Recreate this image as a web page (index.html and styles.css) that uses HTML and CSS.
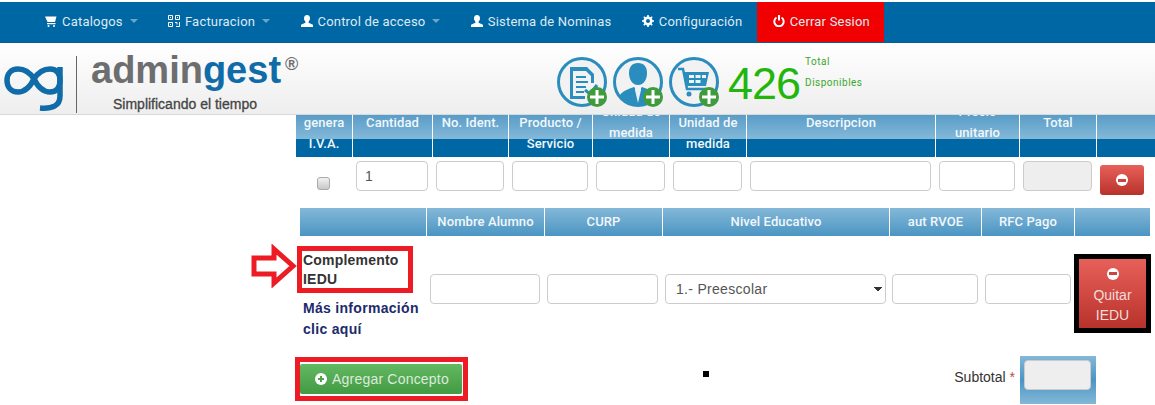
FILE: index.html
```html
<!DOCTYPE html>
<html lang="en">
<head>
    <meta charset="UTF-8">
    <meta name="viewport" content="width=device-width, initial-scale=1.0">
    <title>Admingest</title>
    <link rel="stylesheet" href="styles.css">
</head>
<body>
<nav class="navbar">
    <a class="nav-item">
        <svg class="nav-icon" viewBox="0 0 12 12"><path d="M0 1.500h11.500L10 7H2.500zM2 8h8.500v1.300H2z" fill="#fff"/><circle cx="3.500" cy="11" r="1" fill="#fff"/><circle cx="9" cy="11" r="1" fill="#fff"/></svg>
        <span>Catalogos</span><span class="caret"></span>
    </a>
    <a class="nav-item">
        <svg class="nav-icon" viewBox="0 0 12 12" fill="none" stroke="#fff"><path d="M.5.5h4v4h-4zM7.500.5h4v4h-4zM.5 7.500h4v4h-4zM7 7.500h2v2M11.500 7v4.500H8M2 2.500h1M9 2.500h1M2 9.500h1"/></svg>
        <span>Facturacion</span><span class="caret"></span>
    </a>
    <a class="nav-item">
        <svg class="nav-icon" viewBox="0 0 12 12"><path d="M6 0c2 0 3 1.500 3 3.300C9 5 8.200 6 7.600 6.800v1L12 9.800V12H0V9.800l4.400-2v-1C3.800 6 3 5 3 3.300 3 1.500 4 0 6 0z" fill="#fff"/></svg>
        <span>Control de acceso</span><span class="caret"></span>
    </a>
    <a class="nav-item">
        <svg class="nav-icon" viewBox="0 0 12 12"><path d="M6 0c2 0 3 1.500 3 3.300C9 5 8.200 6 7.600 6.800v1L12 9.800V12H0V9.800l4.400-2v-1C3.800 6 3 5 3 3.300 3 1.500 4 0 6 0z" fill="#fff"/></svg>
        <span>Sistema de Nominas</span>
    </a>
    <a class="nav-item">
        <svg class="nav-icon" viewBox="0 0 12 12"><circle cx="6" cy="6" r="3.300" fill="none" stroke="#fff" stroke-width="2.600"/><path d="M6 0v12M0 6h12M1.800 1.800l8.400 8.400M10.200 1.800l-8.400 8.400" stroke="#fff" stroke-width="1.600" stroke-dasharray="2 8"/></svg>
        <span>Configuración</span>
    </a>
    <a class="nav-item nav-exit">
        <svg class="nav-icon" viewBox="0 0 12 12" fill="none" stroke="#fff" stroke-width="2"><path d="M3.500 2.500a4.700 4.700 0 1 0 5 0M6 0v5.500"/></svg>
        <span>Cerrar Sesion</span>
    </a>
</nav>

<header class="top-header">
    <svg class="logo-mark" viewBox="0 0 66 54" fill="none" stroke="#0f6ca8" stroke-width="5.500">
        <path d="M32 14C27 6 22 4 16 4 9 4 5 9 5 15.500S9 27 16 27c6 0 11-3 16-13 5-8 10-10 16-10 7 0 10 5 10 11.500S55 27 48 27c-6 0-11-3-16-13z"/>
        <path d="M58 2v29c0 10-8 13-20 12"/>
    </svg>
    <div class="logo-divider"></div>
    <div class="brand">
        <div class="brand-name">admin<span class="brand-blue">gest</span><span class="brand-reg">®</span></div>
        <div class="brand-tag">Simplificando el tiempo</div>
    </div>
    <div class="quick-icons">
        <svg class="quick-icon" viewBox="0 0 52 52">
            <circle cx="25" cy="25" r="23.500" fill="#f2f2f2" stroke="#2a8dbd" stroke-width="3"/>
            <path d="M13 10h17l7 7v9h-3v-7l-5-5H16v25h12v3H13z" fill="#2a8dbd"/>
            <path d="M19 19h10v2H19zM19 24h12v2H19zM19 29h10v2H19zM19 34h8v2H19z" fill="#2a8dbd"/>
            <path d="M28 33l5 4 7-9" fill="none" stroke="#2a8dbd" stroke-width="3"/>
            <circle cx="40" cy="40" r="10" fill="#3f9b3c"/>
            <path d="M40 33v14M33 40h14" stroke="#fff" stroke-width="3"/>
        </svg>
        <svg class="quick-icon" viewBox="0 0 52 52">
            <circle cx="25" cy="25" r="23.500" fill="#f2f2f2" stroke="#2a8dbd" stroke-width="3"/>
            <path d="M25 6c6 0 9 4 9 10 0 6-3 12-9 12s-9-6-9-12c0-6 3-10 9-10z" fill="#2a8dbd"/>
            <path d="M6 40c2-6 10-8 15-10l4 4 4-4c5 2 13 4 15 10-4 5-11 8-19 8S10 45 6 40z" fill="#2a8dbd"/>
            <path d="M22 30l3 3 3-3 0 3-3 13-3-13z" fill="#e8f2f7"/>
            <circle cx="40" cy="40" r="10" fill="#3f9b3c"/>
            <path d="M40 33v14M33 40h14" stroke="#fff" stroke-width="3"/>
        </svg>
        <svg class="quick-icon" viewBox="0 0 52 52">
            <circle cx="25" cy="25" r="23.500" fill="#f2f2f2" stroke="#2a8dbd" stroke-width="3"/>
            <path d="M9 12h5l4 20h19" fill="none" stroke="#2a8dbd" stroke-width="2.500"/>
            <path d="M15 15h25l-3 14H18z" fill="#2a8dbd"/>
            <path d="M20 18h5v3h-5zM26.500 18h5v3h-5zM33 18h4v3h-4zM20 23h5v3h-5zM26.500 23h5v3h-5z" fill="#eef5f8"/>
            <circle cx="20" cy="37" r="2.500" fill="#2a8dbd"/>
            <circle cx="33" cy="37" r="2.500" fill="#2a8dbd"/>
            <circle cx="40" cy="40" r="10" fill="#3f9b3c"/>
            <path d="M40 33v14M33 40h14" stroke="#fff" stroke-width="3"/>
        </svg>
    </div>
    <div class="counter">426</div>
    <div class="counter-label">
        <div>Total</div>
        <div>Disponibles</div>
    </div>
</header>

<main class="content">
    <table class="grid-table concept-table">
        <colgroup>
            <col class="w56"><col class="w80"><col class="w76"><col class="w84"><col class="w77">
            <col class="w77"><col class="w189"><col class="w84"><col class="w77"><col class="w59">
        </colgroup>
        <thead>
            <tr>
                <th>genera<br>I.V.A.</th>
                <th>Cantidad</th>
                <th>No. Ident.</th>
                <th>Producto /<br>Servicio</th>
                <th class="th-high">Unidad de<br>medida</th>
                <th>Unidad de<br>medida</th>
                <th>Descripcion</th>
                <th class="th-high">Precio<br>unitario</th>
                <th>Total</th>
                <th></th>
            </tr>
        </thead>
        <tbody>
            <tr>
                <td class="check-cell"><input type="checkbox" class="grey-check"></td>
                <td><input type="text" class="field" value="1"></td>
                <td><input type="text" class="field"></td>
                <td><input type="text" class="field"></td>
                <td><input type="text" class="field"></td>
                <td><input type="text" class="field"></td>
                <td><input type="text" class="field"></td>
                <td><input type="text" class="field"></td>
                <td><input type="text" class="field field-off" disabled></td>
                <td><button class="btn-red btn-small"><span class="minus-icon"></span></button></td>
            </tr>
        </tbody>
    </table>

    <table class="grid-table iedu-table">
        <colgroup>
            <col class="w126"><col class="w118"><col class="w118"><col class="w227">
            <col class="w92"><col class="w93"><col class="w76">
        </colgroup>
        <thead>
            <tr>
                <th></th>
                <th>Nombre Alumno</th>
                <th>CURP</th>
                <th>Nivel Educativo</th>
                <th>aut RVOE</th>
                <th>RFC Pago</th>
                <th></th>
            </tr>
        </thead>
        <tbody>
            <tr>
                <td class="label-cell">
                    <svg class="note-arrow" viewBox="0 0 46 44"><path d="M3 14h20V5l19 17-19 17v-9H3z" fill="#fff" stroke="#ed1c24" stroke-width="5"/></svg>
                    <div class="note-box">Complemento<br>IEDU</div>
                    <a class="more-link">Más información<br>clic aquí</a>
                </td>
                <td class="pad-a"><input type="text" class="field"></td>
                <td class="pad-b"><input type="text" class="field"></td>
                <td class="pad-c"><select class="field field-select"><option>1.- Preescolar</option></select></td>
                <td class="pad-c"><input type="text" class="field"></td>
                <td class="pad-d"><input type="text" class="field"></td>
                <td class="pad-none">
                    <button class="btn-red btn-quit"><span class="minus-icon"></span><br>Quitar<br>IEDU</button>
                </td>
            </tr>
        </tbody>
    </table>

    <div class="bottom-row">
        <div class="note-frame">
            <button class="btn-green">
                <svg class="plus-icon" viewBox="0 0 12 12"><circle cx="6" cy="6" r="6" fill="#fff"/><path d="M6 3v6M3 6h6" stroke="#4ba54a" stroke-width="2"/></svg>
                Agregar Concepto
            </button>
        </div>
        <div class="dot"></div>
        <div class="subtotal-label">Subtotal <span class="req">*</span></div>
        <div class="subtotal-box"><input type="text" class="field field-off" disabled></div>
    </div>
</main>
</body>
</html>
```

FILE: styles.css
```css
html, body {
    margin: 0;
    padding: 0;
    height: 405px;
    overflow: hidden;
    background-color: #fff;
    font-family: "Liberation Sans", Arial, sans-serif;
}

/* barra de arriba */
.navbar {
    display: flex;
    height: 40px;
    margin-top: 2px;
    padding-left: 29px;
    background-color: #0067a5;
    border-bottom: 1px solid #0a5f96;
}
.nav-item {
    display: flex;
    align-items: center;
    padding: 0 14.300px 2px 16px;
    color: #dfeaf3;
    font-family: Roboto, sans-serif;
    font-size: 13px;
    letter-spacing: 0.2px;
}
.nav-icon {
    width: 12px;
    height: 12px;
    margin-right: 5px;
}
.caret {
    width: 0;
    height: 0;
    margin-left: 7px;
    border-left: 4px solid transparent;
    border-right: 4px solid transparent;
    border-top: 4px solid #6fa3c8;
}
.nav-exit {
    padding-right: 14px;
    background-color: #f00000;
}

/* logo y accesos */
.top-header {
    display: flex;
    height: 71px;
    background: linear-gradient(#fff, #eeeeee);
    border-bottom: 1px solid #d9d9d9;
}
.logo-mark {
    width: 66px;
    height: 54px;
    margin: 22px 0 0 2px;
}
.logo-divider {
    width: 1px;
    height: 57px;
    margin: 13px 0 0 8px;
    background-color: #666;
}
.brand {
    margin-left: 14px;
    width: 466px;
}
.brand-name {
    height: 42px;
    margin-top: 6px;
    color: #6d6e70;
    font-size: 38px;
    font-weight: bold;
    line-height: 42px;
}
.brand-blue {
    color: #0f6ca8;
}
.brand-reg {
    margin-left: 4px;
    font-size: 18px;
    font-weight: bold;
    line-height: 0;
    vertical-align: 13px;
}
.brand-tag {
    margin: 5px 0 0 22px;
    color: #444;
    font-size: 14px;
    -webkit-text-stroke: 0.3px #444;
}
.quick-icons {
    display: flex;
    gap: 4px;
    margin-top: 14px;
}
.quick-icon {
    width: 52px;
    height: 52px;
}
.counter {
    margin: 16px 0 0 7px;
    color: #22b60c;
    font-size: 45px;
    letter-spacing: -1px;
    line-height: 50px;
}
.counter-label {
    margin: 8px 0 0 5px;
    color: #3aa82a;
    font-family: Roboto, sans-serif;
    font-size: 10px;
    letter-spacing: 0.5px;
    line-height: 21px;
}

/* tablas */
.content {
    height: 290px;
    overflow: hidden;
    padding-left: 296px;
}
.grid-table {
    table-layout: fixed;
    border-collapse: separate;
    border-spacing: 0;
}
.grid-table th {
    padding: 11px 0 0;
    border-left: 1px solid #fff;
    color: #f2f7fb;
    font-family: Roboto, sans-serif;
    font-size: 13px;
    font-weight: 500;
    letter-spacing: 0.1px;
    line-height: 21px;
    text-align: center;
    vertical-align: top;
}
.grid-table th:first-child {
    border-left: 0;
}
.grid-table th.th-high {
    padding-top: 0;
}
.grid-table td {
    padding: 4px;
    vertical-align: top;
}

.concept-table {
    width: 859px;
    margin-top: -14px;
}
.concept-table thead tr {
    height: 56px;
    background: linear-gradient(#3f8dbf 0, #84b8d8 38px, #0067a5 38px, #0067a5 56px);
}
.concept-table tbody tr {
    height: 51px;
}
.check-cell {
    text-align: center;
}
.grey-check {
    width: 13px;
    height: 13px;
    margin: 16px 2px 0 0;
    appearance: none;
    background: linear-gradient(#f2f2f2, #c8c8c8);
    border: 1px solid #aaa;
    border-radius: 3px;
}

.iedu-table {
    width: 850px;
    margin-left: 4px;
}
.iedu-table thead tr {
    height: 28px;
    background: linear-gradient(#84b8d8, #4b95c3);
}
.iedu-table th {
    padding-top: 0;
    line-height: 27px;
}
.iedu-table tbody tr {
    height: 120px;
}
.label-cell {
    position: relative;
}
.iedu-table td.label-cell {
    padding: 10px 0 0;
}
.iedu-table td.pad-a { padding: 38px 4px 0; }
.iedu-table td.pad-b { padding: 38px 4px 0 3px; }
.iedu-table td.pad-c { padding: 38px 3px 0; }
.iedu-table td.pad-d { padding: 38px 3px 0 4px; }
.iedu-table td.pad-none { padding: 18px 0 0; }

.note-arrow {
    position: absolute;
    left: -49px;
    top: 8px;
    width: 46px;
    height: 44px;
}
.note-box {
    width: 116px;
    height: 47px;
    margin-left: -3px;
    padding-left: 1px;
    box-sizing: border-box;
    border: 5px solid #ed1c24;
    color: #333;
    font-size: 14px;
    font-weight: bold;
    letter-spacing: 0.2px;
    line-height: 19px;
}
.more-link {
    display: block;
    margin: 5px 0 0 3px;
    color: #1c2b6b;
    font-size: 14px;
    font-weight: bold;
    letter-spacing: 0.3px;
    line-height: 21px;
    white-space: nowrap;
}

/* campos */
.field {
    display: block;
    width: 100%;
    height: 30px;
    padding: 0 8px;
    box-sizing: border-box;
    background-color: #fff;
    border: 1px solid #ccc;
    border-radius: 4px;
    color: #555;
    font-family: "Liberation Sans", Arial, sans-serif;
    font-size: 14px;
    letter-spacing: 0.3px;
}
.field-off {
    background-color: #eee;
}
/* flechita del select hecha con dos gradientes */
.field-select {
    padding-left: 10px;
    appearance: none;
    background-image: linear-gradient(45deg, transparent 50%, #333 50%), linear-gradient(-45deg, transparent 50%, #333 50%);
    background-position: 208px 12px, 212px 12px;
    background-size: 4px 4px;
    background-repeat: no-repeat;
}

/* botones */
.btn-red {
    background: linear-gradient(#e8605a, #b8322c);
    border: 0;
    border-radius: 3px;
    color: #f3dcdb;
    font-family: "Liberation Sans", Arial, sans-serif;
    font-size: 14px;
}
.btn-small {
    display: block;
    width: 44px;
    height: 30px;
    margin-top: 4px;
    padding: 2px 0 0;
}
.minus-icon {
    display: inline-block;
    position: relative;
    width: 12px;
    height: 12px;
    border-radius: 50%;
    background-color: #fff;
}
.minus-icon::after {
    content: "";
    position: absolute;
    left: 2px;
    top: 4.500px;
    width: 8px;
    height: 3px;
    background-color: #cc4540;
}
.btn-quit {
    display: block;
    width: 77px;
    height: 79px;
    padding: 2px 0 0;
    border: 5px solid #000;
    border-radius: 0;
    line-height: 20px;
}

.bottom-row {
    display: flex;
    align-items: flex-start;
    height: 49px;
}
.note-frame {
    display: flex;
    margin: 1px 0 0 -1px;
    padding: 2px 1px 2px 0;
    border: 5px solid #ed1c24;
}
.btn-green {
    display: flex;
    align-items: center;
    justify-content: center;
    width: 162px;
    height: 30px;
    padding: 0 0 0 2px;
    background: linear-gradient(#63b961, #429a42);
    border: 0;
    border-radius: 2px;
    color: #dcebdc;
    font-family: "Liberation Sans", Arial, sans-serif;
    font-size: 14px;
    letter-spacing: 0.2px;
}
.plus-icon {
    width: 12px;
    height: 12px;
    margin-right: 5px;
}
.dot {
    width: 6px;
    height: 6px;
    margin: 15px 0 0 235px;
    background-color: #000;
}
.subtotal-label {
    margin: 13px 5px 0 auto;
    color: #333;
    font-size: 14px;
}
.req {
    color: #b94a48;
}
.subtotal-box {
    width: 76px;
    height: 48px;
    margin-right: 59px;
    padding: 4px;
    box-sizing: border-box;
    background: linear-gradient(#84b8d8, #4b95c3 50%, #84b8d8);
}
.subtotal-box .field {
    width: 67px;
}

/* anchos de columnas */
.w56 { width: 56px; }
.w59 { width: 59px; }
.w76 { width: 76px; }
.w77 { width: 77px; }
.w80 { width: 80px; }
.w84 { width: 84px; }
.w92 { width: 92px; }
.w93 { width: 93px; }
.w118 { width: 118px; }
.w126 { width: 126px; }
.w189 { width: 189px; }
.w227 { width: 227px; }
```
